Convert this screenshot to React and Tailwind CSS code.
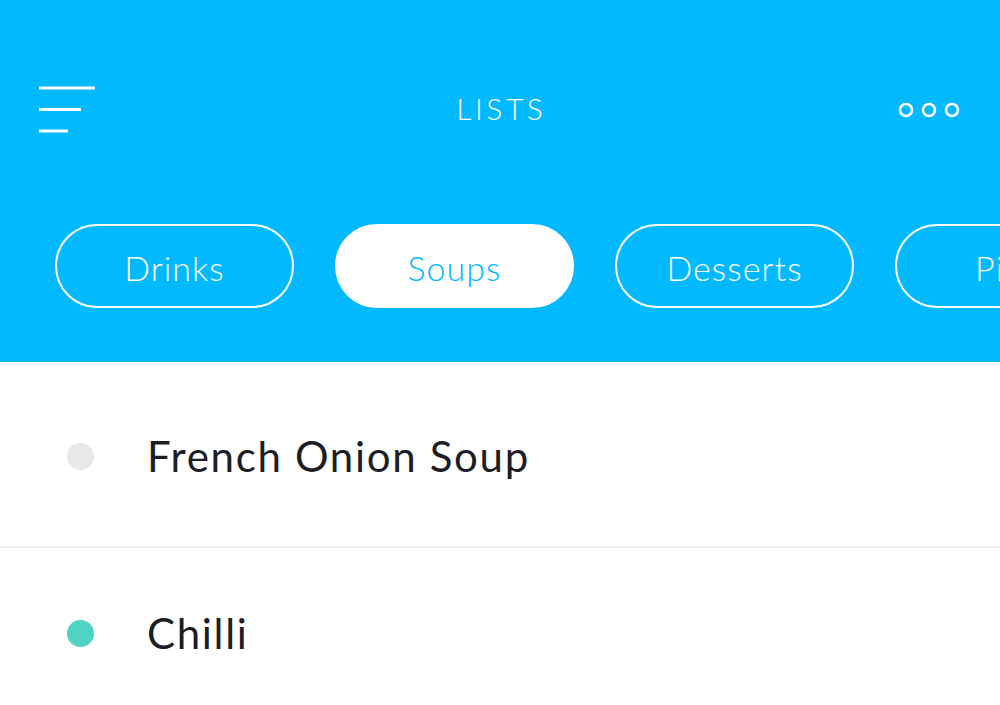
import React from 'react';

const categories = ['Drinks', 'Soups', 'Desserts', 'Pizza'];

const items = [
    { name: 'French Onion Soup', done: false, rowClass: 'h-[186px] pt-[4px]' },
    { name: 'Chilli', done: true, rowClass: 'h-[186px] pb-[14px]' },
];

export default function App() {
    const active = 'Soups';

    return (
        <div className="w-[1000px] h-[705px] overflow-hidden bg-white" style={{ fontFamily: 'Lato, "Noto Sans", sans-serif' }}>
            {/* Cabeçalho */}
            <header className="h-[362px] bg-[#00B9FF] pt-[68px] overflow-hidden">
                <div className="h-[80px] flex items-center pl-[39px] pr-[40px]">
                    <div className="flex-1 flex items-center pt-[3px]">
                        <svg width="57" height="48" viewBox="0 0 57 48" fill="none" stroke="white" strokeWidth="3">
                            <line x1="0" y1="2" x2="56" y2="2" />
                            <line x1="0" y1="23.5" x2="42" y2="23.5" />
                            <line x1="0" y1="45" x2="29" y2="45" />
                        </svg>
                    </div>
                    <h1 className="text-white text-[30px] font-light tracking-[0.12em] pl-[0.12em] leading-none">LISTS</h1>
                    <div className="flex-1 flex items-center justify-end pt-[3px]">
                        <svg width="62" height="18" viewBox="0 0 62 18" fill="none" stroke="white" strokeWidth="2.6">
                            <circle cx="8" cy="9" r="6" />
                            <circle cx="31" cy="9" r="6" />
                            <circle cx="54" cy="9" r="6" />
                        </svg>
                    </div>
                </div>

                {/* Categorias */}
                <div className="mt-[76px] pl-[55px] flex gap-[41px]">
                    {categories.map(c => (
                        <div
                            key={c}
                            className={`shrink-0 w-[239px] h-[84px] pt-[3px] rounded-full border-2 border-white flex items-center justify-center text-[34px] font-light tracking-[0.03em] ${
                                c === active ? 'bg-white text-[#00B9FF]' : 'text-white'
                            }`}
                        >
                            {c}
                        </div>
                    ))}
                </div>
            </header>

            {/* Itens */}
            <main>
                {items.map(item => (
                    <div key={item.name} className={`${item.rowClass} flex items-center border-b-2 border-[#F2F2F2]`}>
                        <span className={`ml-[67px] w-[27px] h-[27px] rounded-full shrink-0 ${item.done ? 'bg-[#4FD3C4]' : 'bg-[#E8E8E8]'}`} />
                        <span className="ml-[53px] text-[42px] text-[#1D1D26] tracking-[0.04em]">{item.name}</span>
                    </div>
                ))}
            </main>
        </div>
    );
}
